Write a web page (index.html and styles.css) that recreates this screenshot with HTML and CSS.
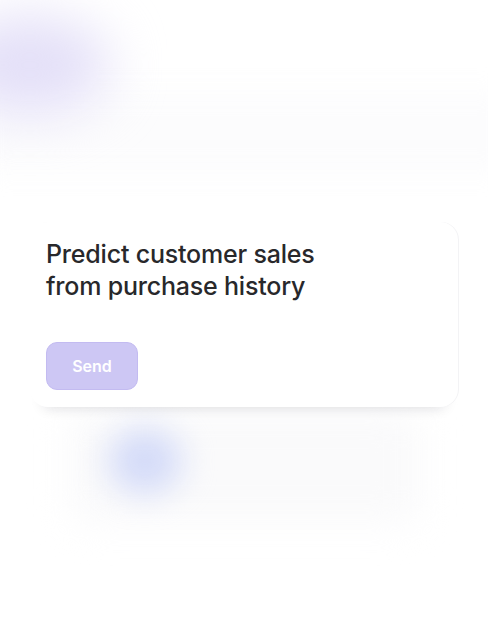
FILE: index.html
```html
<!DOCTYPE html>
<html lang="en">
<head>
<meta charset="utf-8">
<title>Predict</title>
<link rel="stylesheet" href="styles.css">
</head>
<body>
<div class="page">
  <div class="ghost ghost-top"></div>
  <div class="glow glow-purple"></div>
  <div class="ghost ghost-bottom"></div>
  <div class="glow glow-blue"></div>
  <main class="stage">
    <section class="card">
      <h1 class="prompt">Predict customer sales<br>from purchase history</h1>
      <button class="send" type="button">Send</button>
    </section>
  </main>
</div>
</body>
</html>
```

FILE: styles.css
```css
html, body {
  margin: 0;
  padding: 0;
  background: #ffffff;
}

.page {
  position: relative;
  width: 488px;
  height: 627px;
  overflow: hidden;
  background: #ffffff;
  font-family: "Inter", "Noto Sans", sans-serif;
}

.glow {
  position: absolute;
  border-radius: 50%;
}

.glow-purple {
  left: -50px;
  top: 15px;
  width: 160px;
  height: 100px;
  background: #e4e0f8;
  filter: blur(26px);
}

.ghost {
  position: absolute;
}

.ghost-top {
  left: -20px;
  top: 92px;
  width: 530px;
  height: 80px;
  background: #fcfcfd;
  filter: blur(14px);
}

.glow-blue {
  left: 108px;
  top: 428px;
  width: 74px;
  height: 66px;
  background: #d4dbf8;
  filter: blur(16px);
}

.ghost-bottom {
  left: 70px;
  top: 412px;
  width: 350px;
  height: 110px;
  background: #fafafb;
  filter: blur(18px);
  border-radius: 20px;
}

.stage {
  position: relative;
  padding: 222px 30px 0 30px;
}

.card {
  background: #ffffff;
  border-radius: 18px;
  padding: 16px;
  height: 153px;
  width: 396px;
  box-shadow: 1px 0 0 #f3f3f5, 0 14px 14px -14px rgba(20, 20, 40, 0.16);
  display: flex;
  flex-direction: column;
  align-items: flex-start;
}

.prompt {
  margin: 0;
  font-size: 25px;
  line-height: 32px;
  font-weight: 500;
  letter-spacing: -0.2px;
  color: #28282b;
}

.send {
  margin-top: 40px;
  width: 92px;
  height: 48px;
  border-radius: 11px;
  border: 1px solid #c3bbf1;
  background: #cdc7f4;
  color: #ffffff;
  font-family: "Inter", "Noto Sans", sans-serif;
  font-size: 16px;
  font-weight: 600;
  padding: 0;
}
```
